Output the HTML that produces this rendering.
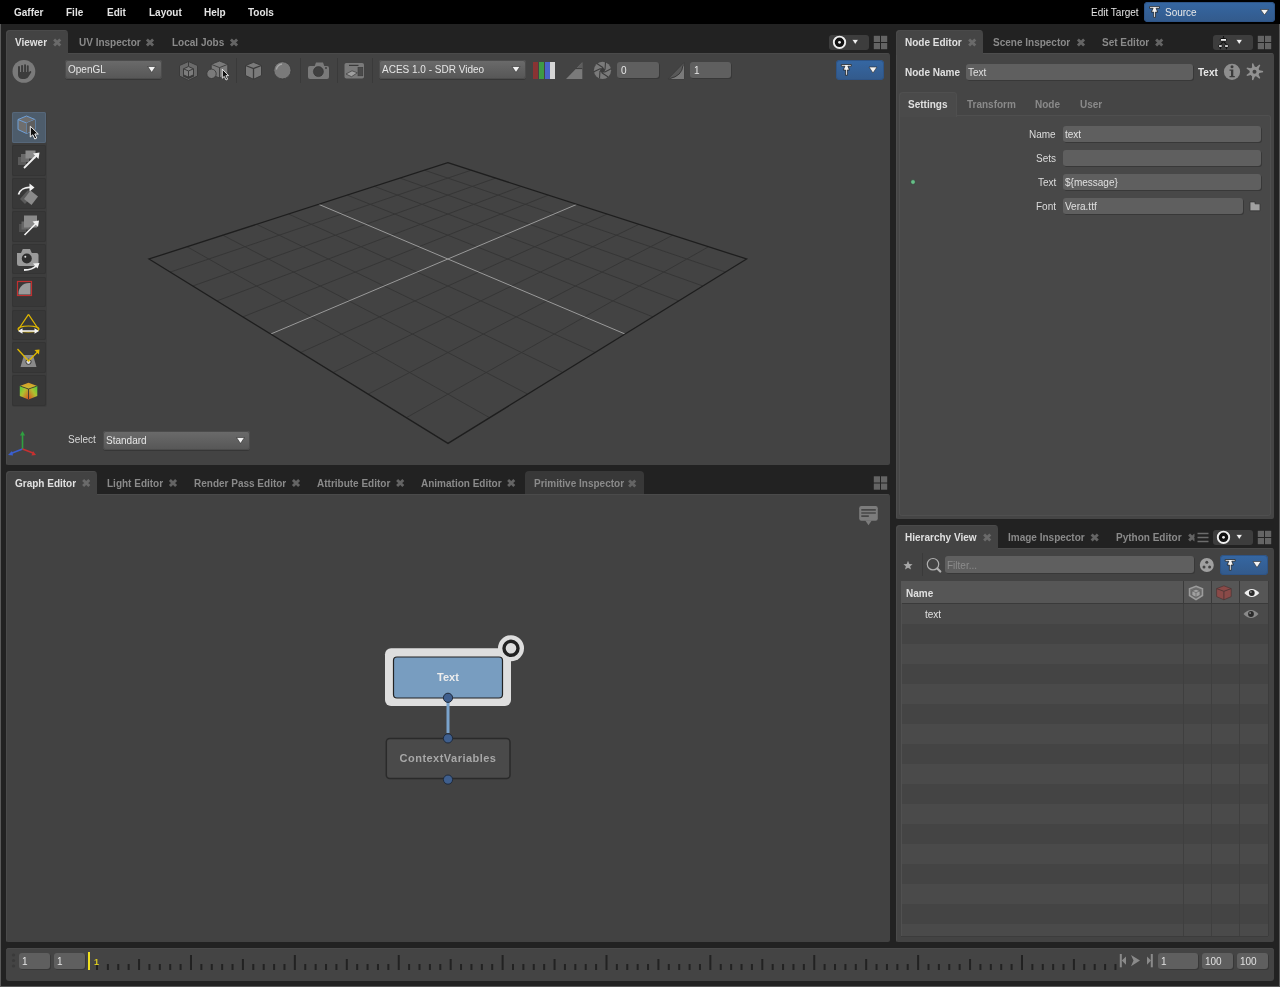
<!DOCTYPE html><html><head><meta charset="utf-8"><style>html,body{margin:0;padding:0;}body{width:1280px;height:987px;overflow:hidden;position:relative;background:#222;font-family:"Liberation Sans", sans-serif;}.t{position:absolute;white-space:nowrap;will-change:transform;}</style></head><body><div style="position:absolute;left:0px;top:24px;width:1px;height:963px;background:#5a5a5a;"></div><div style="position:absolute;left:1279px;top:24px;width:1px;height:963px;background:#5a5a5a;"></div><div style="position:absolute;left:0px;top:986px;width:1280px;height:1px;background:#5a5a5a;"></div><div style="position:absolute;left:0px;top:0px;width:1280px;height:24px;background:#000;"></div><div style="position:absolute;left:1144px;top:2px;width:130.5px;height:19.5px;background:linear-gradient(#3567a3,#335a8b);border-radius:4px;box-shadow:inset 0 0 0 1px #2e5486;"></div><div style="position:absolute;left:6px;top:53px;width:884px;height:412px;background:#434343;border-radius:0 3px 2px 2px;box-shadow:inset 1px 1px 0 #4a4a4a;"></div><div style="position:absolute;left:896px;top:53px;width:378px;height:466px;background:#454545;border-radius:0 3px 2px 2px;box-shadow:inset 1px 1px 0 #4d4d4d;"></div><div style="position:absolute;left:6px;top:494px;width:884px;height:448px;background:#424242;border-radius:0 3px 2px 2px;box-shadow:inset 1px 1px 0 #4a4a4a;"></div><div style="position:absolute;left:896px;top:548px;width:378px;height:394px;background:#434343;border-radius:0 3px 2px 2px;box-shadow:inset 1px 1px 0 #4b4b4b;"></div><div style="position:absolute;left:6px;top:948px;width:1268px;height:33px;background:#444;border-radius:3px;box-shadow:inset 0 1px 0 #4a4a4a;"></div><div style="position:absolute;left:6px;top:30px;width:61.5px;height:25px;background:#434343;border-radius:4px 4px 0 0;box-shadow:inset 1px 1px 0 #4a4a4a;"></div><div style="position:absolute;left:896px;top:30px;width:87px;height:25px;background:#454545;border-radius:4px 4px 0 0;box-shadow:inset 1px 1px 0 #4a4a4a;"></div><div style="position:absolute;left:6px;top:470.5px;width:90.5px;height:25.5px;background:#424242;border-radius:4px 4px 0 0;box-shadow:inset 1px 1px 0 #4a4a4a;"></div><div style="position:absolute;left:525px;top:471px;width:118.5px;height:23px;background:#383838;border-radius:4px 4px 0 0;"></div><div style="position:absolute;left:896px;top:525px;width:102px;height:25px;background:#434343;border-radius:4px 4px 0 0;box-shadow:inset 1px 1px 0 #4a4a4a;"></div><div style="position:absolute;left:829px;top:35px;width:40px;height:15px;background:#3d3d3d;border-radius:3px;"></div><div style="position:absolute;left:1213px;top:530px;width:40px;height:14.5px;background:#3d3d3d;border-radius:3px;"></div><div style="position:absolute;left:1213px;top:35px;width:40px;height:15px;background:#3d3d3d;border-radius:3px;"></div><div style="position:absolute;left:65px;top:60px;width:97px;height:19px;background:linear-gradient(#6b6b6b,#565656);border-radius:3px;box-shadow:0 1px 0 #363636, inset 0 0 0 1px #4c4c4c;"></div><div style="position:absolute;left:235.6px;top:58px;width:1px;height:25px;background:#3a3a3a;"></div><div style="position:absolute;left:300.4px;top:58px;width:1px;height:25px;background:#3a3a3a;"></div><div style="position:absolute;left:336.5px;top:58px;width:1px;height:25px;background:#3a3a3a;"></div><div style="position:absolute;left:372.1px;top:58px;width:1px;height:25px;background:#3a3a3a;"></div><div style="position:absolute;left:379px;top:60px;width:147.25px;height:19.25px;background:linear-gradient(#6b6b6b,#565656);border-radius:3px;box-shadow:0 1px 0 #363636, inset 0 0 0 1px #4c4c4c;"></div><div style="position:absolute;left:533.0px;top:62px;width:5px;height:17px;background:#8a3333;"></div><div style="position:absolute;left:538.8px;top:62px;width:5px;height:17px;background:#3e9a44;"></div><div style="position:absolute;left:544.6px;top:62px;width:5px;height:17px;background:#4a64c8;"></div><div style="position:absolute;left:550.4px;top:62px;width:5px;height:17px;background:#d6d6d6;"></div><div style="position:absolute;left:617px;top:62px;width:41.5px;height:16px;background:#5f5f5f;border-radius:3px;box-shadow:1px 1px 0 #383838;"></div><div style="position:absolute;left:690px;top:62px;width:41px;height:16px;background:#5f5f5f;border-radius:3px;box-shadow:1px 1px 0 #383838;"></div><div style="position:absolute;left:836px;top:60px;width:48px;height:20px;background:linear-gradient(#3567a3,#335a8b);border-radius:4px;box-shadow:inset 0 0 0 1px #2e5486;"></div><div style="position:absolute;left:11.5px;top:111.5px;width:35px;height:295.5px;background:#3d3d3d;border-radius:3px;"></div><div style="position:absolute;left:12px;top:112px;width:34px;height:30.5px;background:#4d5c6b;border-radius:2px;box-shadow:inset 0 0 0 1px #56677a;"></div><div style="position:absolute;left:12px;top:145px;width:34px;height:30.5px;background:#383838;border-radius:2px;box-shadow:inset 0 0 0 1px #343434;"></div><div style="position:absolute;left:12px;top:178px;width:34px;height:30.5px;background:#383838;border-radius:2px;box-shadow:inset 0 0 0 1px #343434;"></div><div style="position:absolute;left:12px;top:211px;width:34px;height:30.5px;background:#383838;border-radius:2px;box-shadow:inset 0 0 0 1px #343434;"></div><div style="position:absolute;left:12px;top:243.5px;width:34px;height:30.5px;background:#383838;border-radius:2px;box-shadow:inset 0 0 0 1px #343434;"></div><div style="position:absolute;left:12px;top:276.5px;width:34px;height:30.5px;background:#383838;border-radius:2px;box-shadow:inset 0 0 0 1px #343434;"></div><div style="position:absolute;left:12px;top:309.5px;width:34px;height:30.5px;background:#383838;border-radius:2px;box-shadow:inset 0 0 0 1px #343434;"></div><div style="position:absolute;left:12px;top:342.2px;width:34px;height:30.5px;background:#383838;border-radius:2px;box-shadow:inset 0 0 0 1px #343434;"></div><div style="position:absolute;left:12px;top:375.2px;width:34px;height:30.5px;background:#383838;border-radius:2px;box-shadow:inset 0 0 0 1px #343434;"></div><div style="position:absolute;left:103px;top:431px;width:147px;height:19px;background:linear-gradient(#6b6b6b,#565656);border-radius:3px;box-shadow:0 1px 0 #363636, inset 0 0 0 1px #4c4c4c;"></div><div style="position:absolute;left:965.5px;top:63.5px;width:227.5px;height:16.5px;background:#5f5f5f;border-radius:3px;box-shadow:1px 1px 0 #383838;"></div><div style="position:absolute;left:899px;top:115px;width:371.5px;height:401px;background:#484848;border-radius:0 3px 3px 3px;box-shadow:inset 0 0 0 1px #4f4f4f;"></div><div style="position:absolute;left:899px;top:92px;width:57.5px;height:24.5px;background:#4a4a4a;border-radius:4px 4px 0 0;box-shadow:inset 1px 1px 0 #4f4f4f, inset -1px 0 0 #4f4f4f;"></div><div style="position:absolute;left:1062.5px;top:125.5px;width:198.70000000000005px;height:16.69999999999999px;background:#5f5f5f;border-radius:3px;box-shadow:1px 1px 0 #383838;"></div><div style="position:absolute;left:1062.5px;top:149.6px;width:198.70000000000005px;height:16.700000000000017px;background:#5f5f5f;border-radius:3px;box-shadow:1px 1px 0 #383838;"></div><div style="position:absolute;left:1062.5px;top:173.5px;width:198.70000000000005px;height:16.80000000000001px;background:#5f5f5f;border-radius:3px;box-shadow:1px 1px 0 #383838;"></div><div style="position:absolute;left:1062.5px;top:197.5px;width:180.79999999999995px;height:16.69999999999999px;background:#5f5f5f;border-radius:3px;box-shadow:1px 1px 0 #383838;"></div><div style="position:absolute;left:921.5px;top:553px;width:1px;height:23px;background:#3a3a3a;"></div><div style="position:absolute;left:944.5px;top:556px;width:249.5px;height:17px;background:#5f5f5f;border-radius:3px;box-shadow:1px 1px 0 #383838;"></div><div style="position:absolute;left:1220px;top:555.2px;width:47.5px;height:19.4px;background:linear-gradient(#3567a3,#335a8b);border-radius:4px;box-shadow:inset 0 0 0 1px #2e5486;"></div><div style="position:absolute;left:901px;top:581px;width:367px;height:355px;background:#454545;"></div><div style="position:absolute;left:901px;top:581px;width:367px;height:23px;background:#565656;box-shadow:inset 0 -1px 0 #3a3a3a;"></div><div style="position:absolute;left:901px;top:603.5px;width:367px;height:20px;background:#4a4a4a;"></div><div style="position:absolute;left:901px;top:623.5px;width:367px;height:20px;background:#444444;"></div><div style="position:absolute;left:901px;top:643.5px;width:367px;height:20px;background:#4a4a4a;"></div><div style="position:absolute;left:901px;top:663.5px;width:367px;height:20px;background:#444444;"></div><div style="position:absolute;left:901px;top:683.5px;width:367px;height:20px;background:#4a4a4a;"></div><div style="position:absolute;left:901px;top:703.5px;width:367px;height:20px;background:#444444;"></div><div style="position:absolute;left:901px;top:723.5px;width:367px;height:20px;background:#4a4a4a;"></div><div style="position:absolute;left:901px;top:743.5px;width:367px;height:20px;background:#444444;"></div><div style="position:absolute;left:901px;top:763.5px;width:367px;height:20px;background:#4a4a4a;"></div><div style="position:absolute;left:901px;top:783.5px;width:367px;height:20px;background:#444444;"></div><div style="position:absolute;left:901px;top:803.5px;width:367px;height:20px;background:#4a4a4a;"></div><div style="position:absolute;left:901px;top:823.5px;width:367px;height:20px;background:#444444;"></div><div style="position:absolute;left:901px;top:843.5px;width:367px;height:20px;background:#4a4a4a;"></div><div style="position:absolute;left:901px;top:863.5px;width:367px;height:20px;background:#444444;"></div><div style="position:absolute;left:901px;top:883.5px;width:367px;height:20px;background:#4a4a4a;"></div><div style="position:absolute;left:901px;top:903.5px;width:367px;height:20px;background:#444444;"></div><div style="position:absolute;left:901px;top:923.5px;width:367px;height:12.5px;background:#4a4a4a;"></div><div style="position:absolute;left:1183px;top:604px;width:1px;height:332px;background:#3f3f3f;"></div><div style="position:absolute;left:1183px;top:581px;width:1px;height:22px;background:#3a3a3a;"></div><div style="position:absolute;left:1211px;top:604px;width:1px;height:332px;background:#3f3f3f;"></div><div style="position:absolute;left:1211px;top:581px;width:1px;height:22px;background:#3a3a3a;"></div><div style="position:absolute;left:1239px;top:604px;width:1px;height:332px;background:#3f3f3f;"></div><div style="position:absolute;left:1239px;top:581px;width:1px;height:22px;background:#3a3a3a;"></div><div style="position:absolute;left:1268px;top:581px;width:1px;height:355px;background:#3c3c3c;"></div><div style="position:absolute;left:901px;top:603px;width:1px;height:333px;background:#505050;"></div><div style="position:absolute;left:901px;top:936px;width:367px;height:1px;background:#3c3c3c;"></div><div style="position:absolute;left:19px;top:952.5px;width:31px;height:16.5px;background:#5f5f5f;border-radius:3px;box-shadow:1px 1px 0 #383838;"></div><div style="position:absolute;left:53.5px;top:952.5px;width:31.5px;height:16.5px;background:#5f5f5f;border-radius:3px;box-shadow:1px 1px 0 #383838;"></div><div style="position:absolute;left:88px;top:952px;width:2px;height:18px;background:#f0e020;"></div><div style="position:absolute;left:1157.7px;top:952.5px;width:40.299999999999955px;height:16.5px;background:#5f5f5f;border-radius:3px;box-shadow:1px 1px 0 #383838;"></div><div style="position:absolute;left:1201.7px;top:952.5px;width:31.299999999999955px;height:16.5px;background:#5f5f5f;border-radius:3px;box-shadow:1px 1px 0 #383838;"></div><div style="position:absolute;left:1236.5px;top:952.5px;width:31.5px;height:16.5px;background:#5f5f5f;border-radius:3px;box-shadow:1px 1px 0 #383838;"></div><svg style="position:absolute;left:0;top:0" width="1280" height="987" viewBox="0 0 1280 987"><g transform="translate(1149.5,6.6)" stroke="#151515" stroke-width="0.7" fill="#f4f4f4"><path d="M0 0 H10 V1.7 H6.6 L8.2 5.5 L6 5.5 L6 10.8 L4.2 10.8 L4.2 5.5 L1.9 5.5 L3.6 1.7 H0 Z"/></g><path d="M1260.5 9.5 L1268.5 9.5 L1264.5 15.0 Z" fill="#f4f4f4" stroke="#2a2a2a" stroke-width="0.6"/><path d="M54.1 39.4 L60.300000000000004 45.6 M60.300000000000004 39.4 L54.1 45.6" stroke="#6a6a6a" stroke-width="2.8"/><path d="M146.9 39.4 L153.1 45.6 M153.1 39.4 L146.9 45.6" stroke="#646464" stroke-width="2.8"/><path d="M230.9 39.4 L237.1 45.6 M237.1 39.4 L230.9 45.6" stroke="#646464" stroke-width="2.8"/><path d="M969.1 39.4 L975.3000000000001 45.6 M975.3000000000001 39.4 L969.1 45.6" stroke="#6a6a6a" stroke-width="2.8"/><path d="M1077.9 39.4 L1084.1 45.6 M1084.1 39.4 L1077.9 45.6" stroke="#646464" stroke-width="2.8"/><path d="M1156.1000000000001 39.4 L1162.3 45.6 M1162.3 39.4 L1156.1000000000001 45.6" stroke="#646464" stroke-width="2.8"/><path d="M83.10000000000001 479.9 L89.3 486.1 M89.3 479.9 L83.10000000000001 486.1" stroke="#6a6a6a" stroke-width="2.8"/><path d="M169.9 479.9 L176.1 486.1 M176.1 479.9 L169.9 486.1" stroke="#646464" stroke-width="2.8"/><path d="M292.9 479.9 L299.1 486.1 M299.1 479.9 L292.9 486.1" stroke="#646464" stroke-width="2.8"/><path d="M397.09999999999997 479.9 L403.3 486.1 M403.3 479.9 L397.09999999999997 486.1" stroke="#646464" stroke-width="2.8"/><path d="M508.09999999999997 479.9 L514.3000000000001 486.1 M514.3000000000001 479.9 L508.09999999999997 486.1" stroke="#646464" stroke-width="2.8"/><path d="M629.1 480.4 L635.3000000000001 486.6 M635.3000000000001 480.4 L629.1 486.6" stroke="#646464" stroke-width="2.8"/><path d="M984.1 534.4 L990.3000000000001 540.6 M990.3000000000001 534.4 L984.1 540.6" stroke="#6a6a6a" stroke-width="2.8"/><path d="M1091.6000000000001 534.4 L1097.8 540.6 M1097.8 534.4 L1091.6000000000001 540.6" stroke="#646464" stroke-width="2.8"/><path d="M1189.1000000000001 534.4 L1195.3 540.6 M1195.3 534.4 L1189.1000000000001 540.6" stroke="#646464" stroke-width="2.8"/><g fill="#646464"><rect x="873.8" y="35.8" width="6.2" height="6.2"/><rect x="881.0" y="35.8" width="6.2" height="6.2"/><rect x="873.8" y="43.0" width="6.2" height="6.2"/><rect x="881.0" y="43.0" width="6.2" height="6.2"/></g><g fill="#646464"><rect x="1257.8" y="35.8" width="6.2" height="6.2"/><rect x="1265.0" y="35.8" width="6.2" height="6.2"/><rect x="1257.8" y="43.0" width="6.2" height="6.2"/><rect x="1265.0" y="43.0" width="6.2" height="6.2"/></g><g fill="#646464"><rect x="873.8" y="476.3" width="6.2" height="6.2"/><rect x="881.0" y="476.3" width="6.2" height="6.2"/><rect x="873.8" y="483.5" width="6.2" height="6.2"/><rect x="881.0" y="483.5" width="6.2" height="6.2"/></g><g fill="#646464"><rect x="1257.8" y="530.8" width="6.2" height="6.2"/><rect x="1265.0" y="530.8" width="6.2" height="6.2"/><rect x="1257.8" y="538.0" width="6.2" height="6.2"/><rect x="1265.0" y="538.0" width="6.2" height="6.2"/></g><g transform="translate(829,35)"><circle cx="10.5" cy="7.3" r="5.7" fill="#111" stroke="#f0f0f0" stroke-width="1.9"/><circle cx="10.5" cy="7.3" r="1.4" fill="#f0f0f0"/><path d="M23 4.5 L29.5 4.5 L26.25 9.5 Z" fill="#f0f0f0" stroke="#2a2a2a" stroke-width="0.6"/></g><g transform="translate(1213,530)"><circle cx="10.5" cy="7.3" r="5.7" fill="#111" stroke="#f0f0f0" stroke-width="1.9"/><circle cx="10.5" cy="7.3" r="1.4" fill="#f0f0f0"/><path d="M23 4.5 L29.5 4.5 L26.25 9.5 Z" fill="#f0f0f0" stroke="#2a2a2a" stroke-width="0.6"/></g><g transform="translate(1213,35)"><path d="M10.5 1V3.5M10.5 6.3L7.4 9.6M10.5 6.3L13.5 9.6M7.4 12.5V14.3M13.5 12.5V14.3" stroke="#111" stroke-width="1.1"/><rect x="7.4" y="3.5" width="6.1" height="2.8" rx="0.6" fill="#f2f2f2" stroke="#111" stroke-width="1"/><rect x="5.6" y="9.6" width="3.6" height="2.9" rx="0.6" fill="#cfcfcf" stroke="#111" stroke-width="1"/><rect x="11.6" y="9.6" width="3.8" height="2.9" rx="0.6" fill="#cfcfcf" stroke="#111" stroke-width="1"/><path d="M23 4.5 L29.5 4.5 L26.25 9.5 Z" fill="#f0f0f0" stroke="#2a2a2a" stroke-width="0.6"/></g><rect x="1194.5" y="528" width="2.5" height="18" fill="#222"/><path d="M1197.5 533.5H1208.5M1197.5 537.5H1208.5M1197.5 541.5H1208.5" stroke="#6c6c6c" stroke-width="1.6"/><circle cx="23.9" cy="71.4" r="11.4" fill="#7a7a7a"/><g fill="#3c3c3c"><rect x="18" y="66" width="2" height="8" rx="0.9"/><rect x="21.1" y="65" width="2" height="9" rx="0.9"/><rect x="24.1" y="64.2" width="1.9" height="9.8" rx="0.9"/><rect x="26.8" y="65.2" width="1.9" height="8.8" rx="0.9"/><path d="M18 72 L18 75 Q18.4 78.9 22.4 79 L25 79 Q27.4 78.9 28.8 76.2 L31.3 72.2 Q31.2 70.6 29.9 71.3 L28.7 72.6 L28.7 72 Z"/></g><path d="M147.7 66.5 L155.7 66.5 L151.7 72.5 Z" fill="#f2f2f2" stroke="#2a2a2a" stroke-width="0.6"/><g stroke="#3a3a3a" stroke-width="1"><path d="M188.5 61.5 L197.5 65.5 L197.5 76 L188.5 80.3 L179.5 76 L179.5 65.5 Z" fill="#6a6a6a"/><path d="M188.5 68 L194 70.5 L194 76.5 L188.5 79 L183 76.5 L183 70.5 Z" fill="#393939" stroke="none"/><path d="M188.5 66.5 L193.5 68.8 L193.5 74.8 L188.5 77.2 L183.5 74.8 L183.5 68.8 Z" fill="#7c7c7c"/><path d="M183.5 68.8 L188.5 71 L193.5 68.8 M188.5 71 L188.5 77.2" fill="none"/><path d="M188.5 61.5 L188.5 66" fill="none"/></g><g stroke="#3a3a3a" stroke-width="0.9"><path d="M219.5 61 L227.8 64.3 L227.8 74.5 L219.5 78 L211.2 74.5 L211.2 64.3 Z" fill="#7a7a7a"/><path d="M211.2 64.3 L219.5 67.6 L227.8 64.3 M219.5 67.6 L219.5 78" fill="none"/><circle cx="211.5" cy="73.8" r="4.7" fill="#7a7a7a"/></g><path d="M222.3 69.2 L222.3 78.2 L224.3 76.4 L226 80 L227.6 79.2 L225.9 75.7 L228.6 75.6 Z" fill="#111" stroke="#f0f0f0" stroke-width="0.9"/><g stroke="#3a3a3a" stroke-width="1"><path d="M253.5 62.3 L261.5 65.5 L261.5 75.5 L253.5 79.3 L245.5 75.5 L245.5 65.5 Z" fill="#7a7a7a"/><path d="M245.5 65.5 L253.5 68.5 L261.5 65.5 M253.5 68.5 L253.5 79.3" fill="none" stroke-width="1.3"/></g><circle cx="282.4" cy="70.3" r="8.6" fill="#7a7a7a" stroke="#3a3a3a" stroke-width="0.8"/><path d="M276.3 69.5 C277 66.5 279 64.5 282 64" stroke="#a8a8a8" stroke-width="1.4" fill="none"/><path d="M311.5 66 L314.7 66 L316 62.5 L323 62.5 L324.3 66 L327 66 Q329 66 329 68 L329 77 Q329 79 327 79 L310 79 Q308 79 308 77 L308 68 Q308 66 310 66 Z" fill="#7a7a7a"/><circle cx="318.4" cy="71.6" r="5" fill="#404040" stroke="#333" stroke-width="0.6"/><circle cx="326" cy="68" r="0.9" fill="#3a3a3a"/><rect x="344.5" y="63" width="19.5" height="15.5" rx="1.8" fill="#7a7a7a"/><rect x="349" y="64.8" width="9.5" height="1.2" fill="#3a3a3a"/><rect x="358" y="67.3" width="4.8" height="8.5" fill="#4a4a4a" stroke="#3a3a3a" stroke-width="0.6"/><path d="M346 74 L352 70.8 L357.3 72.8 L351.5 76.7 Z" fill="#a0a0a0" stroke="#3a3a3a" stroke-width="0.7"/><path d="M512 66.5 L520 66.5 L516.0 72.5 Z" fill="#f2f2f2" stroke="#2a2a2a" stroke-width="0.6"/><path d="M566 79 L582.3 62.3 L582.3 79 Z" fill="#7a7a7a"/><path d="M575.8 68.9 L582.3 62.3 L582.3 68.9 Z" fill="#5e5e5e"/><path d="M575.8 68.6 L582.3 68.6" stroke="#3c3c3c" stroke-width="1"/><circle cx="602.5" cy="70.3" r="8.6" fill="#7a7a7a"/><path d="M596.84 63.56L603.17 67.79M605.51 62.03L605.01 69.63M611.17 68.77L604.34 72.14M608.16 77.04L601.83 72.81M599.49 78.57L599.99 70.97M593.83 71.83L600.66 68.46" stroke="#3c3c3c" stroke-width="1.1" fill="none"/><path d="M603.20 67.69 L605.11 69.60 L604.41 72.21 L601.80 72.91 L599.89 71.00 L600.59 68.39 Z" fill="#3c3c3c"/><path d="M668 79 L684 62.5 L684 79 Z" fill="#585858" stroke="#383838" stroke-width="0.6"/><path d="M669.5 79 Q682 76.5 683.2 65.5 L684 66 L684 79 Z" fill="#7a7a7a"/><path d="M669.5 78.6 Q682 76 683 65.5" stroke="#333" stroke-width="0.9" fill="none"/><g transform="translate(841.3,64.5)" stroke="#151515" stroke-width="0.7" fill="#f4f4f4"><path d="M0 0 H10 V1.7 H6.6 L8.2 5.5 L6 5.5 L6 10.8 L4.2 10.8 L4.2 5.5 L1.9 5.5 L3.6 1.7 H0 Z"/></g><path d="M869 67 L877 67 L873.0 73 Z" fill="#f4f4f4" stroke="#2a2a2a" stroke-width="0.6"/><g transform="translate(26.5,125)"><path d="M0 -9 L8.5 -5.5 L8.5 4.5 L0 8.5 L-8.5 4.5 L-8.5 -5.5 Z" fill="#6e6e6e" stroke="#6fa0d8" stroke-width="1"/><path d="M-8.5 -5.5 L0 -2 L8.5 -5.5 M0 -2 L0 8.5" fill="none" stroke="#6fa0d8" stroke-width="1"/><path d="M0 -2 L8.5 -5.5 L8.5 4.5 L0 8.5 Z" fill="#5e5e5e"/></g><path d="M30.3 126.2 L30.3 137 L32.8 134.8 L34.8 139 L36.8 138 L34.8 134 L38.3 134 Z" fill="#111" stroke="#f2f2f2" stroke-width="1"/><g><rect x="18" y="157" width="8" height="8" fill="#5a5a5a"/><rect x="21" y="154" width="8" height="8" fill="#6a6a6a"/><rect x="25.5" y="150.5" width="10" height="8" fill="#8a8a8a"/><path d="M24 168 L37.5 154.5" stroke="#f2f2f2" stroke-width="1.8"/><path d="M39.5 152.5 L33 153.5 L38.5 159 Z" fill="#f2f2f2"/></g><g><path d="M20 199 L28 190 L33 195 L25 204 Z" fill="#5a5a5a"/><path d="M24 199 L30.5 190.5 L38 196.5 L31.5 205 Z" fill="#8a8a8a"/><path d="M18.5 194.5 C20 189.5 25 187 31 187.5" stroke="#f2f2f2" stroke-width="1.8" fill="none"/><path d="M34.5 187.5 L29.5 183.5 L29.5 191.5 Z" fill="#f2f2f2"/></g><g><rect x="19" y="224" width="7" height="8" fill="#505050"/><rect x="21.5" y="221.5" width="8" height="8" fill="#666"/><rect x="24" y="215.5" width="13" height="12" fill="#8a8a8a"/><path d="M24.5 235 L37 222.5" stroke="#f2f2f2" stroke-width="1.6"/><path d="M39 220.5 L32.5 221.5 L38 227 Z" fill="#f2f2f2"/></g><g><path d="M17 253 L21 253 L22.8 249 L30 249 L31.8 253 L36.5 253 Q38.5 253 38.5 255 L38.5 263.5 Q38.5 266 36 266 L19.5 266 Q17 266 17 263.5 Z" fill="#9a9a9a"/><circle cx="26.8" cy="258.5" r="5" fill="#2e2e2e"/><circle cx="25.3" cy="256.8" r="1" fill="#ddd"/><path d="M24 270 C30 270 34 268.5 36.5 265.5" stroke="#f2f2f2" stroke-width="1.8" fill="none"/><path d="M39.5 263 L33 263.5 L37.5 268.5 Z" fill="#f2f2f2"/></g><rect x="17.5" y="281.5" width="14" height="14" fill="none" stroke="#c03030" stroke-width="1.2"/><path d="M18.5 294.5 L18.5 293 C18.5 288 22.5 283 29 283 L30.5 283 L30.5 294.5 Z" fill="#9a9a9a"/><g stroke="#e0b800" stroke-width="1.2" fill="none"><path d="M28.5 314.3 L19 328.5 M28.5 314.3 L38 328.5"/><ellipse cx="28.5" cy="329" rx="10.5" ry="3"/></g><path d="M21 331 L36 331" stroke="#f4f4f4" stroke-width="1.5"/><path d="M18 331 L22.5 328.3 L22.5 333.7 Z M39 331 L34.5 328.3 L34.5 333.7 Z" fill="#f4f4f4"/><path d="M20.5 367 L24 355 L33 355 L36.5 367 Z" fill="#8a8a8a"/><circle cx="28.5" cy="361.8" r="2.6" fill="#ddd" stroke="#333" stroke-width="1"/><path d="M17.5 349 L28.5 361 L38.5 351" stroke="#e0b800" stroke-width="1.3" fill="none"/><path d="M39.5 349.5 L34.5 350 L39 354.5 Z" fill="#e0b800"/><defs><linearGradient id="cg1" x1="0" y1="0" x2="0" y2="1"><stop offset="0" stop-color="#d89a28"/><stop offset="1" stop-color="#c8c030"/></linearGradient><linearGradient id="cg2" x1="0" y1="0" x2="1" y2="1"><stop offset="0" stop-color="#48d040"/><stop offset="0.45" stop-color="#b0c030"/><stop offset="1" stop-color="#e04a20"/></linearGradient><linearGradient id="cg3" x1="1" y1="0" x2="0" y2="1"><stop offset="0" stop-color="#48d040"/><stop offset="0.45" stop-color="#b0c030"/><stop offset="1" stop-color="#e04a20"/></linearGradient></defs><path d="M28.5 382.8 L37.3 385.9 L28.5 389 L19.8 385.9 Z" fill="url(#cg1)"/><path d="M19.8 385.9 L28.5 389 L28.5 399.4 L19.8 396 Z" fill="url(#cg2)"/><path d="M37.3 385.9 L28.5 389 L28.5 399.4 L37.3 396 Z" fill="url(#cg3)"/><path d="M20.5 386.2 L28.5 389 L36.6 386.2 M28.5 389 V399" stroke="#333" stroke-width="0.8" fill="none"/><path d="M471.10 170.21L170.18 272.07M424.51 170.21L725.45 272.06M495.58 178.10L192.79 286.01M400.04 178.09L702.89 285.99M521.31 186.39L216.96 300.91M374.32 186.38L678.76 300.90M548.39 195.12L242.86 316.88M347.24 195.11L652.90 316.87M607.10 214.04L300.67 352.54M288.53 214.03L595.17 352.52M638.98 224.31L333.06 372.51M256.66 224.30L562.82 372.49M672.73 235.19L368.16 394.16M222.89 235.19L527.76 394.15M708.54 246.74L406.34 417.71M187.07 246.73L489.62 417.70" stroke="#363636" stroke-width="1" fill="none"/><path d="M576.95 204.32L270.69 334.05M318.68 204.31L625.11 334.03" stroke="#9a9a9a" stroke-width="1" fill="none"/><path d="M447.8 162.7 L746.6 259 L448 443.4 L149 259 Z" stroke="#1e1e1e" stroke-width="1.3" fill="none"/><path d="M22.5 449 L22.5 434" stroke="#2fa040" stroke-width="1.6"/><path d="M22.5 431 L20 435.5 L25 435.5 Z" fill="#2fa040"/><path d="M22.5 449 L11 453.5" stroke="#3a5fd0" stroke-width="1.6"/><path d="M8 455 L12 451 L13 455.5 Z" fill="#3a5fd0"/><path d="M22.5 449 L33 453" stroke="#c83030" stroke-width="1.6"/><path d="M36 455 L31.5 455.5 L33 451 Z" fill="#c83030"/><path d="M236.5 437.5 L244.5 437.5 L240.5 443.5 Z" fill="#f2f2f2" stroke="#2a2a2a" stroke-width="0.6"/><circle cx="1232" cy="71.8" r="8.1" fill="#8e8e8e"/><circle cx="1232" cy="66.8" r="1.5" fill="#3c3c3c"/><path d="M1229.5 69.5 L1233.3 69.5 L1233.3 76 L1234.8 76 L1234.8 77.3 L1229.5 77.3 L1229.5 76 L1231 76 L1231 70.8 L1229.5 70.8 Z" fill="#3c3c3c"/><path d="M1258.30 73.30 L1263.10 72.30 L1263.10 71.10 L1258.30 70.10 Z" fill="#929292"/><path d="M1255.62 75.67 L1259.39 78.80 L1260.33 78.05 L1258.12 73.67 Z" fill="#929292"/><path d="M1252.09 75.05 L1252.00 79.95 L1253.17 80.22 L1255.21 75.76 Z" fill="#929292"/><path d="M1250.38 71.91 L1246.49 74.89 L1247.01 75.97 L1251.77 74.79 Z" fill="#929292"/><path d="M1251.77 68.61 L1247.01 67.43 L1246.49 68.51 L1250.38 71.49 Z" fill="#929292"/><path d="M1255.21 67.64 L1253.17 63.18 L1252.00 63.45 L1252.09 68.35 Z" fill="#929292"/><path d="M1258.12 69.73 L1260.33 65.35 L1259.39 64.60 L1255.62 67.73 Z" fill="#929292"/><circle cx="1254.5" cy="71.7" r="4.9" fill="#929292"/><circle cx="1254.5" cy="71.7" r="2" fill="#424242"/><circle cx="913" cy="182" r="2.4" fill="#66c088" stroke="#363636" stroke-width="0.7"/><path d="M1250 201.9 L1255 201.9 L1255 203.8 L1260 203.8 L1260 210.8 L1250 210.8 Z" fill="#a0a0a0" stroke="#363636" stroke-width="0.8"/><rect x="859.2" y="506" width="18.6" height="14.8" rx="2.2" fill="#7c7c7c"/><path d="M865.3 520.5 L868.5 525.3 L871.7 520.5 Z" fill="#7c7c7c"/><path d="M861.3 509.9H875.8M861.3 513H875.8M861.3 516.1H868.8" stroke="#474747" stroke-width="1.7"/><rect x="385" y="648.3" width="126" height="57.7" rx="6" fill="#dedede"/><circle cx="511" cy="648.3" r="13" fill="#dedede"/><circle cx="511" cy="648.3" r="7" fill="#dedede" stroke="#222" stroke-width="3.4"/><rect x="393.5" y="657" width="109" height="41" rx="3.5" fill="#789dc0" stroke="#222" stroke-width="1.2"/><path d="M448 702 L448 733" stroke="#7aa3cc" stroke-width="3"/><rect x="386.3" y="738.5" width="123.7" height="40" rx="3.5" fill="#4a4a4a" stroke="#2a2a2a" stroke-width="1.5"/><circle cx="448" cy="697.8" r="4.6" fill="#3f5f8e" stroke="#1f2a3a" stroke-width="1"/><circle cx="448" cy="738.4" r="4.6" fill="#3f5f8e" stroke="#1f2a3a" stroke-width="1"/><circle cx="448" cy="779.6" r="4.6" fill="#3f5f8e" stroke="#1f2a3a" stroke-width="1"/><path d="M908 560.8 L909.3 564 L912.6 564.2 L910.1 566.3 L911 569.6 L908 567.8 L905 569.6 L905.9 566.3 L903.4 564.2 L906.7 564 Z" fill="#a8a8a8"/><circle cx="933" cy="564.2" r="5.7" fill="none" stroke="#b0b0b0" stroke-width="1.2"/><path d="M937.3 568.5 L940.3 571.5" stroke="#b0b0b0" stroke-width="2.2" stroke-linecap="round"/><circle cx="1206.8" cy="565" r="7" fill="#a0a0a0"/><circle cx="1206.8" cy="562.2" r="1.5" fill="#444"/><circle cx="1204" cy="567" r="1.5" fill="#444"/><circle cx="1209.6" cy="567" r="1.5" fill="#444"/><g transform="translate(1225.2,559.5)" stroke="#151515" stroke-width="0.7" fill="#f4f4f4"><path d="M0 0 H10 V1.7 H6.6 L8.2 5.5 L6 5.5 L6 10.8 L4.2 10.8 L4.2 5.5 L1.9 5.5 L3.6 1.7 H0 Z"/></g><path d="M1253 561.5 L1261 561.5 L1257.0 567.5 Z" fill="#f4f4f4" stroke="#2a2a2a" stroke-width="0.6"/><path d="M1196 586.3 L1202.5 588.8 L1202.5 595.5 L1196 599.6 L1189.5 595.5 L1189.5 588.8 Z" fill="#6e6e6e" stroke="#9c9c9c" stroke-width="1.5"/><path d="M1196 589.2 L1200 590.9 L1200 595.3 L1196 597.2 L1192 595.3 L1192 590.9 Z" fill="#a0a0a0" stroke="#5a5a5a" stroke-width="0.6"/><path d="M1192 590.9 L1196 592.6 L1200 590.9 M1196 592.6 V597.2" stroke="#5a5a5a" stroke-width="0.6" fill="none"/><path d="M1223.9 585.8 L1231.2 588.6 L1231.2 596.6 L1223.9 599.8 L1216.6 596.6 L1216.6 588.6 Z" fill="#8a4a48" stroke="#4a3434" stroke-width="0.7"/><path d="M1216.6 588.6 L1223.9 591.3 L1231.2 588.6 M1223.9 591.3 L1223.9 599.8" stroke="#4a3434" stroke-width="0.9" fill="none"/><path d="M1244.3 593 Q1251.8 585 1259.3 593 Q1251.8 601 1244.3 593 Z" fill="#f0f0f0"/><circle cx="1251.8" cy="593" r="2.9" fill="#2a2a2a"/><circle cx="1250.8999999999999" cy="592.1" r="0.8" fill="#aaa"/><path d="M1243.5 614 Q1251 606 1258.5 614 Q1251 622 1243.5 614 Z" fill="#8a8a8a"/><circle cx="1251" cy="614" r="2.9" fill="#2a2a2a"/><circle cx="1250.1" cy="613.1" r="0.8" fill="#aaa"/><circle cx="13.5" cy="955" r="1.6" fill="#3a3a3a"/><circle cx="13.5" cy="960.5" r="1.6" fill="#3a3a3a"/><circle cx="13.5" cy="966" r="1.6" fill="#3a3a3a"/><path d="M107.89 964V970M118.28 964V970M128.66 964V970M139.05 959V970M149.44 964V970M159.82 964V970M170.21 964V970M180.60 964V970M190.99 955V970M201.38 964V970M211.76 964V970M222.15 964V970M232.54 964V970M242.92 959V970M253.31 964V970M263.70 964V970M274.09 964V970M284.48 964V970M294.86 955V970M305.25 964V970M315.64 964V970M326.02 964V970M336.41 964V970M346.80 959V970M357.19 964V970M367.57 964V970M377.96 964V970M388.35 964V970M398.74 955V970M409.12 964V970M419.51 964V970M429.90 964V970M440.29 964V970M450.67 959V970M461.06 964V970M471.45 964V970M481.84 964V970M492.22 964V970M502.61 955V970M513.00 964V970M523.39 964V970M533.77 964V970M544.16 964V970M554.55 959V970M564.94 964V970M575.33 964V970M585.71 964V970M596.10 964V970M606.49 955V970M616.88 964V970M627.26 964V970M637.65 964V970M648.04 964V970M658.42 959V970M668.81 964V970M679.20 964V970M689.59 964V970M699.97 964V970M710.36 955V970M720.75 964V970M731.14 964V970M741.52 964V970M751.91 964V970M762.30 959V970M772.69 964V970M783.07 964V970M793.46 964V970M803.85 964V970M814.24 955V970M824.62 964V970M835.01 964V970M845.40 964V970M855.79 964V970M866.17 959V970M876.56 964V970M886.95 964V970M897.34 964V970M907.72 964V970M918.11 955V970M928.50 964V970M938.89 964V970M949.27 964V970M959.66 964V970M970.05 959V970M980.44 964V970M990.82 964V970M1001.21 964V970M1011.60 964V970M1021.99 955V970M1032.38 964V970M1042.76 964V970M1053.15 964V970M1063.54 964V970M1073.92 959V970M1084.31 964V970M1094.70 964V970M1105.09 964V970M1115.47 964V970" stroke="#222" stroke-width="2"/><path d="M97 964V970" stroke="#222" stroke-width="2"/><rect x="1119.8" y="954" width="2" height="13.3" fill="#8a8a8a"/><path d="M1126 956.5 L1121.8 960.6 L1126 964.7 Z" fill="#8a8a8a"/><path d="M1131 955 L1140 960.6 L1131 966.3 L1133.5 960.6 Z" fill="#8a8a8a"/><rect x="1150.8" y="954" width="2" height="13.3" fill="#8a8a8a"/><path d="M1147 956.5 L1151 960.6 L1147 964.7 Z" fill="#8a8a8a"/></svg><div class="t" style="left:14.3px;top:6.54px;font-size:10px;line-height:12px;font-weight:bold;color:#e4e4e4;">Gaffer</div><div class="t" style="left:66px;top:6.54px;font-size:10px;line-height:12px;font-weight:bold;color:#e4e4e4;">File</div><div class="t" style="left:107px;top:6.54px;font-size:10px;line-height:12px;font-weight:bold;color:#e4e4e4;">Edit</div><div class="t" style="left:148.75px;top:6.54px;font-size:10px;line-height:12px;font-weight:bold;color:#e4e4e4;">Layout</div><div class="t" style="left:203.75px;top:6.54px;font-size:10px;line-height:12px;font-weight:bold;color:#e4e4e4;">Help</div><div class="t" style="left:248px;top:6.54px;font-size:10px;line-height:12px;font-weight:bold;color:#e4e4e4;">Tools</div><div class="t" style="left:1091px;top:6.54px;font-size:10px;line-height:12px;font-weight:normal;color:#e4e4e4;">Edit Target</div><div class="t" style="left:1165px;top:6.54px;font-size:10px;line-height:12px;font-weight:normal;color:#e8e8e8;">Source</div><div class="t" style="left:15px;top:36.53px;font-size:10px;line-height:12px;font-weight:bold;color:#e0e0e0;">Viewer</div><div class="t" style="left:78.6px;top:36.53px;font-size:10px;line-height:12px;font-weight:bold;color:#8a8a8a;">UV Inspector</div><div class="t" style="left:171.6px;top:36.53px;font-size:10px;line-height:12px;font-weight:bold;color:#8a8a8a;">Local Jobs</div><div class="t" style="left:905.4px;top:36.53px;font-size:10px;line-height:12px;font-weight:bold;color:#e0e0e0;">Node Editor</div><div class="t" style="left:993px;top:36.53px;font-size:10px;line-height:12px;font-weight:bold;color:#8a8a8a;">Scene Inspector</div><div class="t" style="left:1102px;top:36.53px;font-size:10px;line-height:12px;font-weight:bold;color:#8a8a8a;">Set Editor</div><div class="t" style="left:15px;top:478.04px;font-size:10px;line-height:12px;font-weight:bold;color:#e0e0e0;">Graph Editor</div><div class="t" style="left:107px;top:478.04px;font-size:10px;line-height:12px;font-weight:bold;color:#8a8a8a;">Light Editor</div><div class="t" style="left:194px;top:478.04px;font-size:10px;line-height:12px;font-weight:bold;color:#8a8a8a;">Render Pass Editor</div><div class="t" style="left:317px;top:478.04px;font-size:10px;line-height:12px;font-weight:bold;color:#8a8a8a;">Attribute Editor</div><div class="t" style="left:421px;top:478.04px;font-size:10px;line-height:12px;font-weight:bold;color:#8a8a8a;">Animation Editor</div><div class="t" style="left:533.5px;top:478.04px;font-size:10px;line-height:12px;font-weight:bold;color:#8a8a8a;">Primitive Inspector</div><div class="t" style="left:905px;top:531.53px;font-size:10px;line-height:12px;font-weight:bold;color:#e0e0e0;">Hierarchy View</div><div class="t" style="left:1008px;top:531.53px;font-size:10px;line-height:12px;font-weight:bold;color:#8a8a8a;">Image Inspector</div><div class="t" style="left:1116.4px;top:531.53px;font-size:10px;line-height:12px;font-weight:bold;color:#8a8a8a;">Python Editor</div><div class="t" style="left:68px;top:64.03px;font-size:10px;line-height:12px;font-weight:normal;color:#e6e6e6;">OpenGL</div><div class="t" style="left:382px;top:64.03px;font-size:10px;line-height:12px;font-weight:normal;color:#e6e6e6;">ACES 1.0 - SDR Video</div><div class="t" style="left:620.5px;top:65.03px;font-size:10px;line-height:12px;font-weight:normal;color:#e6e6e6;">0</div><div class="t" style="left:693.5px;top:65.03px;font-size:10px;line-height:12px;font-weight:normal;color:#e6e6e6;">1</div><div class="t" style="left:68.3px;top:434.04px;font-size:10px;line-height:12px;font-weight:normal;color:#d8d8d8;">Select</div><div class="t" style="left:106px;top:435.04px;font-size:10px;line-height:12px;font-weight:normal;color:#e6e6e6;">Standard</div><div class="t" style="left:905px;top:66.53px;font-size:10px;line-height:12px;font-weight:bold;color:#e0e0e0;">Node Name</div><div class="t" style="left:968px;top:66.53px;font-size:10px;line-height:12px;font-weight:normal;color:#e0e0e0;">Text</div><div class="t" style="left:1198.4px;top:66.53px;font-size:10px;line-height:12px;font-weight:bold;color:#e8e8e8;">Text</div><div class="t" style="left:908.4px;top:98.53px;font-size:10px;line-height:12px;font-weight:bold;color:#e0e0e0;">Settings</div><div class="t" style="left:967.2px;top:98.53px;font-size:10px;line-height:12px;font-weight:bold;color:#8a8a8a;">Transform</div><div class="t" style="left:1035.3px;top:98.53px;font-size:10px;line-height:12px;font-weight:bold;color:#8a8a8a;">Node</div><div class="t" style="left:1080.3px;top:98.53px;font-size:10px;line-height:12px;font-weight:bold;color:#8a8a8a;">User</div><div class="t" style="right:224px;top:129.23px;font-size:10px;line-height:12px;color:#dcdcdc;">Name</div><div class="t" style="left:1064.5px;top:129.23px;font-size:10px;line-height:12px;font-weight:normal;color:#e0e0e0;">text</div><div class="t" style="right:224px;top:153.34px;font-size:10px;line-height:12px;color:#dcdcdc;">Sets</div><div class="t" style="right:224px;top:177.34px;font-size:10px;line-height:12px;color:#dcdcdc;">Text</div><div class="t" style="left:1064.5px;top:177.34px;font-size:10px;line-height:12px;font-weight:normal;color:#e0e0e0;">${message}</div><div class="t" style="right:224px;top:201.23px;font-size:10px;line-height:12px;color:#dcdcdc;">Font</div><div class="t" style="left:1064.5px;top:201.23px;font-size:10px;line-height:12px;font-weight:normal;color:#e0e0e0;">Vera.ttf</div><div class="t" style="left:385px;width:126px;text-align:center;top:671px;font-size:11px;line-height:13px;font-weight:bold;color:#ececec;">Text</div><div class="t" style="left:386px;width:124px;text-align:center;top:751.5px;font-size:11px;line-height:13px;font-weight:bold;color:#a8a8a8;letter-spacing:0.47px;">ContextVariables</div><div class="t" style="left:947px;top:559.53px;font-size:10px;line-height:12px;font-weight:normal;color:#8c8c8c;">Filter...</div><div class="t" style="left:906px;top:587.53px;font-size:10px;line-height:12px;font-weight:bold;color:#e0e0e0;">Name</div><div class="t" style="left:924.7px;top:608.53px;font-size:10px;line-height:12px;font-weight:normal;color:#e0e0e0;">text</div><div class="t" style="left:22px;top:956.03px;font-size:10px;line-height:12px;font-weight:normal;color:#e6e6e6;">1</div><div class="t" style="left:56.5px;top:956.03px;font-size:10px;line-height:12px;font-weight:normal;color:#e6e6e6;">1</div><div class="t" style="left:94.2px;top:957.38px;font-size:9px;line-height:11px;font-weight:bold;color:#d8c820;">1</div><div class="t" style="left:1161px;top:956.03px;font-size:10px;line-height:12px;font-weight:normal;color:#e0e0e0;">1</div><div class="t" style="left:1204.5px;top:956.03px;font-size:10px;line-height:12px;font-weight:normal;color:#e0e0e0;">100</div><div class="t" style="left:1239.5px;top:956.03px;font-size:10px;line-height:12px;font-weight:normal;color:#e0e0e0;">100</div></body></html>
